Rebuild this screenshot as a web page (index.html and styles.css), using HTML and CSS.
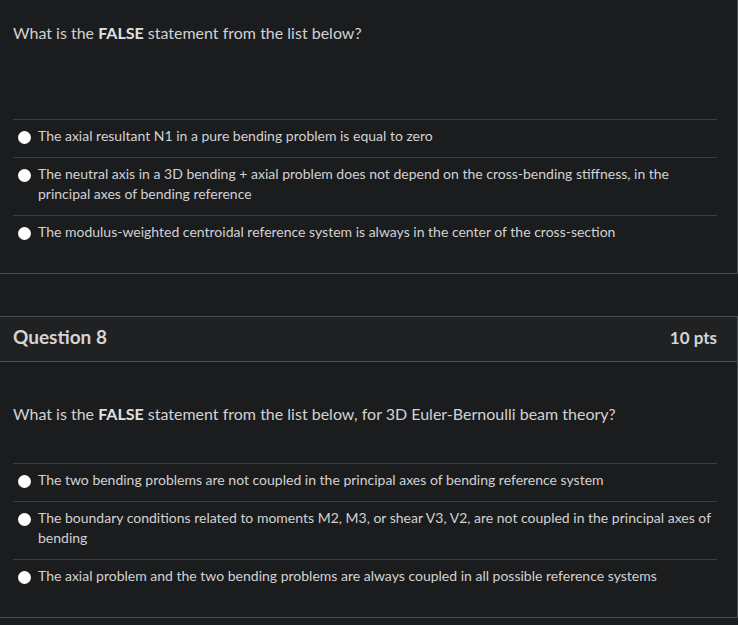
FILE: index.html
```html
<!DOCTYPE html>
<html>
<head>
<meta charset="utf-8">
<link rel="stylesheet" href="styles.css">
</head>
<body>
<div class="card card-first">
  <div class="q-body">
    <p class="q-text q-text-extra">What is the <strong>FALSE</strong> statement from the list below?</p>
    <div class="answers">
      <div class="answer"><span class="radio"></span><span class="label">The axial resultant N1 in a pure bending problem is equal to zero</span></div>
      <div class="answer"><span class="radio"></span><span class="label">The neutral axis in a 3D bending + axial problem does not depend on the cross-bending stiffness, in the principal axes of bending reference</span></div>
      <div class="answer"><span class="radio"></span><span class="label">The modulus-weighted centroidal reference system is always in the center of the cross-section</span></div>
    </div>
  </div>
</div>

<div class="card card-second">
  <div class="q-header">
    <span class="q-title">Question 8</span>
    <span class="q-pts">10 pts</span>
  </div>
  <div class="q-body q-body-second">
    <p class="q-text">What is the <strong>FALSE</strong> statement from the list below, for 3D Euler-Bernoulli beam theory?</p>
    <div class="answers">
      <div class="answer"><span class="radio"></span><span class="label">The two bending problems are not coupled in the principal axes of bending reference system</span></div>
      <div class="answer"><span class="radio"></span><span class="label">The boundary conditions related to moments M2, M3, or shear V3, V2, are not coupled in the principal axes of bending</span></div>
      <div class="answer"><span class="radio"></span><span class="label">The axial problem and the two bending problems are always coupled in all possible reference systems</span></div>
    </div>
  </div>
</div>
</body>
</html>
```

FILE: styles.css
```css
html, body {
  margin: 0;
  padding: 0;
}

body {
  background: #1b1c1e;
  color: #d2d2d2;
  font-family: Lato, "Noto Sans", sans-serif;
  width: 738px;
  height: 625px;
  overflow: hidden;
}

.card {
  border-right: 1px solid #4c4d4f;
  border-bottom: 1px solid #4c4d4f;
}

.card-second {
  margin-top: 42px;
  border-top: 1px solid #4c4d4f;
}

.q-header {
  display: flex;
  justify-content: space-between;
  align-items: baseline;
  background: #202123;
  border-bottom: 1px solid #4c4d4f;
  padding: 8px 20px 11px 13px;
  line-height: 24px;
}

.q-title {
  font-size: 19px;
  font-weight: 700;
  color: #d4d4d4;
}

.q-pts {
  font-size: 17px;
  font-weight: 700;
  color: #d4d4d4;
}

.q-body {
  padding: 21px 20px 20px 13px;
}

.q-body-second {
  padding-top: 40px;
}

.q-text {
  margin: 0 0 37px 0;
  font-size: 16px;
  line-height: 24px;
}

.q-text-extra {
  margin-bottom: 74px;
}

.q-text strong {
  font-weight: 700;
  color: #e0e0e0;
}

.answers {
  display: flex;
  flex-direction: column;
}

.answer {
  display: flex;
  align-items: flex-start;
  gap: 7px;
  border-top: 1px solid #3c3d3f;
  padding: 6px 0 11px 5px;
  font-size: 14px;
  line-height: 20px;
}

.radio {
  flex: none;
  width: 13px;
  height: 13px;
  margin-top: 5px;
  border-radius: 50%;
  background: #ffffff;
}

.label {
  color: #d2d2d2;
}
```
